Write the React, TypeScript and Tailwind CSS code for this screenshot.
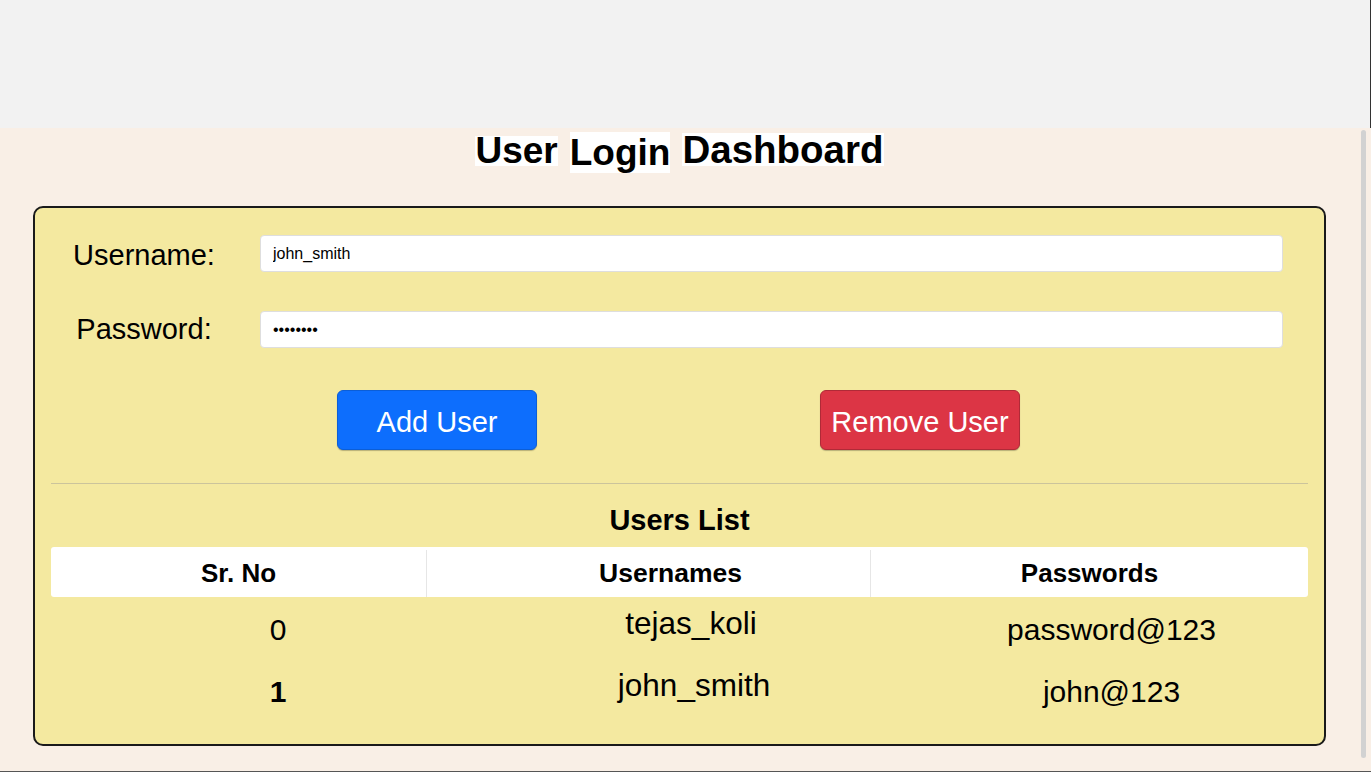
import React from "react";

const font = { fontFamily: '"Liberation Sans", Arial, sans-serif' };

export default function App() {
  return (
    <div
      className="w-[1371px] h-[772px] flex flex-col overflow-hidden text-black"
      style={font}
    >
      <div className="h-[128px] shrink-0 bg-[#f2f2f2] border-r border-[#333]" />
      <div className="relative flex-1 bg-[#f9efe6] border-b border-[#555]">
        {/* title */}
        <div className="h-[78px] flex justify-center items-start gap-[12px] font-bold text-[37px] pr-[12px]">
          <span className="mt-[8px] h-[30px] leading-[30px] bg-white">User</span>
          <span className="mt-[4px] h-[41px] leading-[41px] bg-white">Login</span>
          <span className="mt-[5px] h-[33px] leading-[33px] bg-white text-[38.5px]">Dashboard</span>
        </div>

        {/* card */}
        <div className="ml-[33px] w-[1293px] h-[540px] border-2 border-[#1a1a1a] rounded-[10px] bg-[#f4e9a0] pt-[27px]">
          <div className="flex items-center">
            <div className="w-[218px] h-[37px] text-center text-[29px] leading-[37px] translate-y-[2px]">Username:</div>
            <input
              readOnly
              defaultValue="john_smith"
              className="ml-[7px] w-[1023px] h-[37px] bg-white border border-[#dedede] rounded-[4px] px-[12px] text-[16px] outline-none"
              style={font}
            />
          </div>
          <div className="flex items-center mt-[39px]">
            <div className="w-[218px] h-[37px] text-center text-[29px] leading-[37px]">Password:</div>
            <input
              readOnly
              type="password"
              defaultValue="john@123"
              className="ml-[7px] w-[1023px] h-[37px] bg-white border border-[#dedede] rounded-[4px] px-[12px] text-[16px] outline-none"
              style={font}
            />
          </div>

          <div className="flex justify-center gap-[283px] mt-[42px] pr-[2px]">
            <button
              className="w-[200px] h-[60px] rounded-[6px] bg-[#0d6efd] border border-[#0b5ed7] shadow-[0_1px_1px_rgba(0,0,0,0.25)] text-white text-[29px] pt-[6px]"
              style={font}
            >
              Add User
            </button>
            <button
              className="w-[200px] h-[60px] rounded-[6px] bg-[#dc3545] border border-[#b02a37] shadow-[0_1px_1px_rgba(0,0,0,0.25)] text-white text-[29px] pt-[6px]"
              style={font}
            >
              Remove User
            </button>
          </div>

          <div className="mx-[16px] mt-[33px] h-px bg-[#cbc49c]" />

          <div className="mt-[19px] text-center font-bold text-[29px] leading-[34px]">Users List</div>

          <div className="mx-[16px] mt-[10px]">
            <div className="flex h-[50px] bg-white rounded-[3px] font-bold text-[26px] pt-[3px]">
              <div className="w-[376px] flex items-center justify-center border-r border-[#e6e6e6]">Sr. No</div>
              <div className="w-[444px] flex items-center justify-center border-r border-[#e6e6e6]">
                <span className="ml-[44px] text-[26.5px]">Usernames</span>
              </div>
              <div className="flex-1 flex items-center justify-center">Passwords</div>
            </div>

            <div className="flex h-[64px] items-center text-[30px]">
              <div className="w-[454px] text-center">0</div>
              <div className="w-[372px] text-center pb-[10px] text-[31.5px]">tejas_koli</div>
              <div className="flex-1 text-center pl-[38px]">password@123</div>
            </div>
            <div className="flex h-[60px] items-center text-[30px]">
              <div className="w-[454px] text-center font-bold">1</div>
              <div className="w-[372px] text-center pb-[10px] pl-[6px] text-[31.5px]">john_smith</div>
              <div className="flex-1 text-center pl-[38px]">john@123</div>
            </div>
          </div>
        </div>

        {/* scrollbar thumb */}
        <div className="absolute right-[5px] top-[2px] w-[5px] h-[628px] rounded-full bg-[#d2d2d2]" />
      </div>
    </div>
  );
}
